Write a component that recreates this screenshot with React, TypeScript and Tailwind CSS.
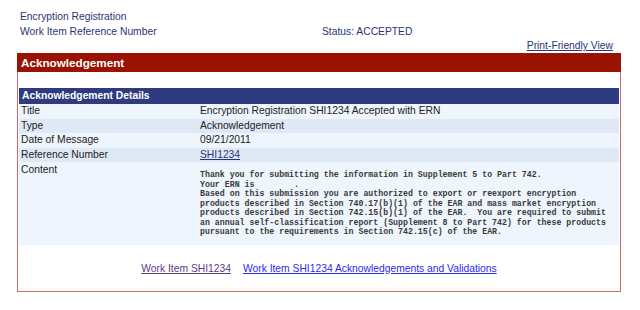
import React from "react";

const rows: { label: string; value: string; link?: boolean; dark?: boolean }[] = [
  { label: "Title", value: "Encryption Registration SHI1234 Accepted with ERN" },
  { label: "Type", value: "Acknowledgement", dark: true },
  { label: "Date of Message", value: "09/21/2011" },
  { label: "Reference Number", value: "SHI1234", link: true, dark: true },
];

const content = `Thank you for submitting the information in Supplement 5 to Part 742.
Your ERN is        .
Based on this submission you are authorized to export or reexport encryption
products described in Section 740.17(b)(1) of the EAR and mass market encryption
products described in Section 742.15(b)(1) of the EAR.  You are required to submit
an annual self-classification report (Supplement 8 to Part 742) for these products
pursuant to the requirements in Section 742.15(c) of the EAR.`;

export default function App() {
  return (
    <div
      className="w-[640px] h-[310px] bg-white overflow-hidden text-[10.3px]"
      style={{ fontFamily: '"Liberation Sans", Arial, sans-serif' }}
    >
      <div className="pt-[9px] pl-[20px] text-[#2b3475]">
        <div className="leading-[15px]">Encryption Registration</div>
        <div className="flex leading-[15px]">
          <span className="w-[302px]">Work Item Reference Number</span>
          <span>Status: ACCEPTED</span>
        </div>
      </div>
      <div className="flex justify-end pr-[27px] h-[14px] leading-[14px]">
        <a className="underline text-[#2b3475] cursor-pointer">Print-Friendly View</a>
      </div>
      <div className="ml-[17px] w-[604px]">
        <div className="h-[19px] bg-[#991202] text-white font-bold text-[11.7px] leading-[19px] pl-[4px]">
          Acknowledgement
        </div>
        <div className="border-x border-b border-[#c86a6a] px-px">
          <div className="h-[16px]" />
          <div className="h-[16px] bg-[#2e3c7f] text-white font-bold text-[10.3px] leading-[16px] pl-[3px]">
            Acknowledgement Details
          </div>
          {rows.map((r) => (
            <div
              key={r.label}
              className={`flex h-[14.6px] leading-[14.6px] text-[#222] ${
                r.dark ? "bg-[#dfe9f6]" : "bg-[#eef5fc]"
              }`}
            >
              <div className="w-[181px] pl-[2px]">{r.label}</div>
              <div>
                {r.link ? (
                  <a className="underline text-[#2b3475] cursor-pointer">{r.value}</a>
                ) : (
                  r.value
                )}
              </div>
            </div>
          ))}
          <div className="flex bg-[#eef5fc] text-[#222] pb-[8px]">
            <div className="w-[181px] pl-[2px] pt-[1px] leading-[14px]">Content</div>
            <pre
              className="mt-[8px] text-[8.25px] leading-[9.45px] text-[#3a3a3a] font-bold"
              style={{ fontFamily: '"Liberation Mono", "Courier New", monospace' }}
            >
              {content}
            </pre>
          </div>
          <div className="flex justify-center gap-[12px] pt-[18px] pb-[16px] leading-[12px]">
            <a className="underline text-[#5a3a8c] cursor-pointer">Work Item SHI1234</a>
            <a className="underline text-[#2a2af0] cursor-pointer">
              Work Item SHI1234 Acknowledgements and Validations
            </a>
          </div>
        </div>
      </div>
    </div>
  );
}
